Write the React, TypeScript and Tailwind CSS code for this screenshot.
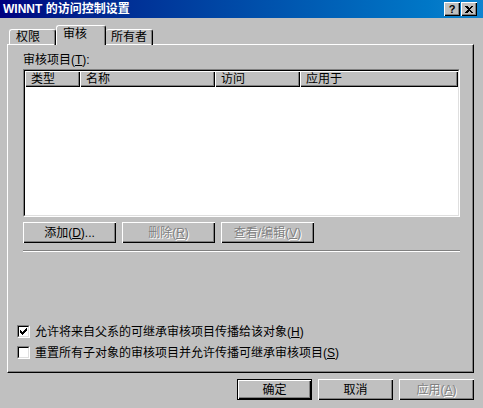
import { ReactNode } from 'react';

// Windows 2000 style "访问控制设置" dialog, audit tab

interface BtnProps {
  children: ReactNode;
  width: string;
  disabled?: boolean;
  isDefault?: boolean;
}

function Win2kButton({ children, width, disabled, isDefault }: BtnProps) {
  if (isDefault) {
    return (
      <div className={`${width} h-[21px] border border-black flex`}>
        <div className="flex-1 flex items-center justify-center shadow-[inset_1px_1px_#fff,inset_-1px_-1px_#000,inset_-2px_-2px_#808080]">
          {children}
        </div>
      </div>
    );
  }
  return (
    <div
      className={`${width} h-[21px] flex items-center justify-center shadow-[inset_1px_1px_#fff,inset_-1px_-1px_#000,inset_-2px_-2px_#808080] ${
        disabled ? 'text-[#808080] [text-shadow:1px_1px_0_#fff]' : 'text-black'
      }`}
    >
      {children}
    </div>
  );
}

function Checkbox({ checked }: { checked: boolean }) {
  return (
    <div className="w-[13px] h-[13px] shrink-0 border border-t-[#808080] border-l-[#808080] border-r-white border-b-white">
      <div className="w-full h-full bg-white border border-t-black border-l-black border-r-[#dfdfdf] border-b-[#dfdfdf] flex items-center justify-center">
        {checked && (
          <svg width="7" height="7" viewBox="0 0 7 7" shapeRendering="crispEdges">
            <path d="M0 2H1V3H2V4H3V3H4V2H5V1H6V0H7V3H6V4H5V5H4V6H3V7H2V6H1V5H0Z" fill="#000" />
          </svg>
        )}
      </div>
    </div>
  );
}

function HeaderCell({ label, width }: { label: string; width: string }) {
  return (
    <div className={`${width} h-[16px] pl-[6px] leading-[16px] shadow-[inset_1px_1px_#fff,inset_-1px_-1px_#000,inset_-2px_-2px_#808080] bg-[#c0c0c0]`}>
      {label}
    </div>
  );
}

export default function App() {
  return (
    <div className="w-[483px] h-[408px] bg-[#c0c0c0] flex flex-col text-[12px] text-black font-['Liberation_Sans','Noto_Sans_CJK_SC',sans-serif] overflow-hidden select-none">
      {/* title bar */}
      <div className="h-[18px] shrink-0 bg-gradient-to-r from-[#000080] to-[#1084d0] flex items-center justify-between pl-[3px] pr-[6px]">
        <span className="text-white font-bold leading-[14px]">WINNT 的访问控制设置</span>
        <div className="flex gap-[1px]">
          <div className="w-[16px] h-[14px] flex items-center justify-center shadow-[inset_1px_1px_#fff,inset_-1px_-1px_#000,inset_-2px_-2px_#808080] bg-[#c0c0c0]">
            <span className="font-['Liberation_Sans',sans-serif] font-bold text-[11px] leading-[11px]">?</span>
          </div>
          <div className="w-[16px] h-[14px] flex items-center justify-center shadow-[inset_1px_1px_#fff,inset_-1px_-1px_#000,inset_-2px_-2px_#808080] bg-[#c0c0c0]">
            <svg width="8" height="7" viewBox="0 0 8 7" shapeRendering="crispEdges">
              <path d="M0 0H2L4 2L6 0H8L5 3.5L8 7H6L4 5L2 7H0L3 3.5Z" fill="#000" />
            </svg>
          </div>
        </div>
      </div>

      {/* tabs */}
      <div className="h-[27px] shrink-0 flex items-end pl-[9px] -mb-px relative z-10">
        <div className="w-[47px] h-[16px] pl-[6px] leading-[15px] border-l border-t border-white rounded-tl-[3px] rounded-tr-[3px] border-r border-r-black shadow-[inset_-1px_0_#808080]">
          权限
        </div>
        <div className="w-[50px] h-[20px] pl-[6px] pt-[1px] leading-[14px] bg-[#c0c0c0] border-l border-t border-white rounded-tl-[3px] rounded-tr-[3px] border-r border-r-black shadow-[inset_-1px_0_#808080]">
          审核
        </div>
        <div className="w-[47px] h-[16px] pl-[5px] leading-[15px] border-t border-white rounded-tl-[3px] rounded-tr-[3px] border-r border-r-black shadow-[inset_-1px_0_#808080]">
          所有者
        </div>
      </div>

      {/* tab panel */}
      <div className="ml-[7px] mr-[9px] h-[329px] shrink-0 border-l border-t border-white border-r border-b border-r-black border-b-black">
        <div className="h-full flex flex-col pl-[15px] pr-[12px] shadow-[inset_-1px_-1px_#808080]">
          <div className="mt-[8px] h-[14px] leading-[14px]">
            审核项目(<u>T</u>):
          </div>

          {/* list view */}
          <div className="mt-[2px] w-[437px] h-[148px] border border-t-[#808080] border-l-[#808080] border-r-white border-b-white">
            <div className="w-full h-full bg-white border border-t-black border-l-black border-r-[#dfdfdf] border-b-[#dfdfdf]">
              <div className="flex">
                <HeaderCell label="类型" width="w-[55px]" />
                <HeaderCell label="名称" width="w-[135px]" />
                <HeaderCell label="访问" width="w-[85px]" />
                <HeaderCell label="应用于" width="w-[158px]" />
              </div>
            </div>
          </div>

          <div className="mt-[5px] flex gap-[6px]">
            <Win2kButton width="w-[93px]">
              添加(<u>D</u>)...
            </Win2kButton>
            <Win2kButton width="w-[93px]" disabled>
              删除(<u>R</u>)
            </Win2kButton>
            <Win2kButton width="w-[93px]" disabled>
              查看/编辑(<u>V</u>)
            </Win2kButton>
          </div>

          <div className="mt-[7px] w-[437px] h-[2px] border-t border-t-[#808080] border-b border-b-white" />

          <div className="mt-[73px] -ml-[6px] flex items-center gap-[5px] h-[13px]">
            <Checkbox checked />
            <span className="leading-[14px]">
              允许将来自父系的可继承审核项目传播给该对象(<u>H</u>)
            </span>
          </div>
          <div className="mt-[8px] -ml-[6px] flex items-center gap-[5px] h-[13px]">
            <Checkbox checked={false} />
            <span className="leading-[14px]">
              重置所有子对象的审核项目并允许传播可继承审核项目(<u>S</u>)
            </span>
          </div>
        </div>
      </div>

      {/* dialog buttons */}
      <div className="mt-[6px] flex justify-end gap-[6px] pr-[9px]">
        <Win2kButton width="w-[75px]" isDefault>
          确定
        </Win2kButton>
        <Win2kButton width="w-[75px]">取消</Win2kButton>
        <Win2kButton width="w-[75px]" disabled>
          应用(<u>A</u>)
        </Win2kButton>
      </div>
    </div>
  );
}
